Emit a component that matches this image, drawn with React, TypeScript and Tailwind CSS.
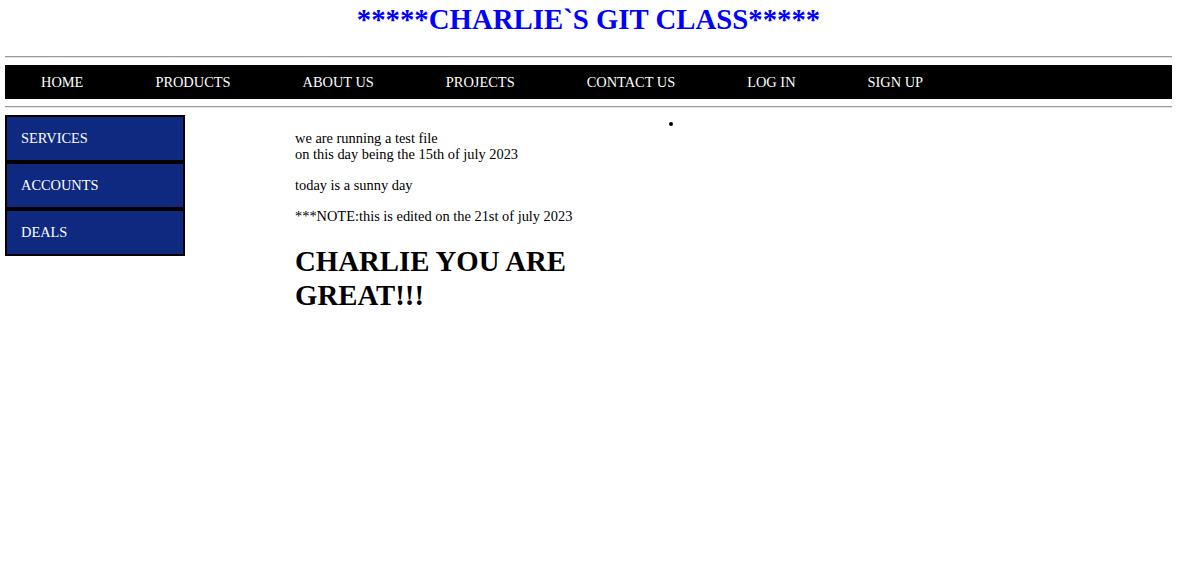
const navItems = ['HOME', 'PRODUCTS', 'ABOUT US', 'PROJECTS', 'CONTACT US', 'LOG IN', 'SIGN UP'];
const sideItems = ['SERVICES', 'ACCOUNTS', 'DEALS'];

const Rule = () => (
  <div className="h-[2px] border-t border-t-[#9a9a9a] border-b border-b-[#e4e4e4]" />
);

export default function App() {
  return (
    <div
      className="min-h-[588px] bg-white pl-[5px] pr-[7px] pt-[2px] text-[14.4px] text-black"
      style={{ fontFamily: '"Liberation Serif", "Times New Roman", serif' }}
    >
      <h1 className="mb-[20px] text-center text-[28.8px] font-bold leading-[34px] text-[#0000ff]">
        *****CHARLIE`S GIT CLASS*****
      </h1>
      <Rule />
      <nav className="my-[7px] h-[34px] bg-black">
        <ul className="flex h-full items-center">
          {navItems.map((item) => (
            <li key={item} className="px-[36px] leading-[17px] text-white">
              {item}
            </li>
          ))}
        </ul>
      </nav>
      <Rule />
      <div className="mt-[7px] flex items-start">
        <aside className="w-[180px] shrink-0">
          {sideItems.map((item) => (
            <div
              key={item}
              className="border-2 border-black bg-[#0f2980] px-[14px] py-[13px] leading-[17px] text-white"
            >
              {item}
            </div>
          ))}
        </aside>
        <main className="ml-[110px] w-[330px] shrink-0">
          <p className="mt-[15px] leading-[16px]">
            we are running a test file
            <br />
            on this day being the 15th of july 2023
          </p>
          <p className="mt-[15px] leading-[16px]">today is a sunny day</p>
          <p className="mt-[15px] leading-[16px]">***NOTE:this is edited on the 21st of july 2023</p>
          <h2 className="mt-[20px] text-[28.8px] font-bold leading-[34px]">CHARLIE YOU ARE GREAT!!!</h2>
        </main>
        <ul className="ml-[22px] list-disc pl-[37px] leading-[17px]">
          <li>&nbsp;</li>
        </ul>
      </div>
    </div>
  );
}
